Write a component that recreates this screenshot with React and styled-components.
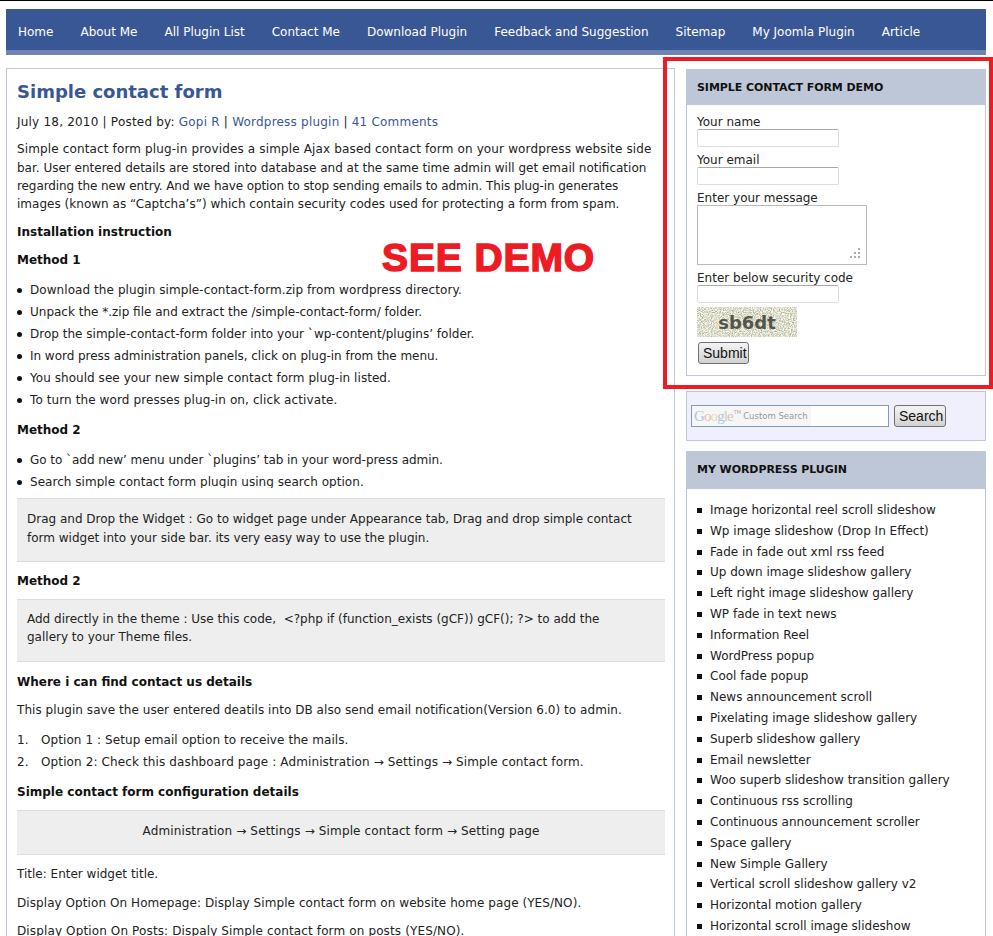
import React from "react";
import styled, { createGlobalStyle } from "styled-components";

const navItems = ["Home", "About Me", "All Plugin List", "Contact Me", "Download Plugin", "Feedback and Suggestion", "Sitemap", "My Joomla Plugin", "Article"];

const method1 = [
  { text: "Download the plugin simple-contact-form.zip from wordpress directory.", ls: 0.07 },
  { text: "Unpack the *.zip file and extract the /simple-contact-form/ folder.", ls: 0 },
  { text: "Drop the simple-contact-form folder into your `wp-content/plugins’ folder.", ls: 0.01 },
  { text: "In word press administration panels, click on plug-in from the menu.", ls: -0.03 },
  { text: "You should see your new simple contact form plug-in listed.", ls: 0.05 },
  { text: "To turn the word presses plug-in on, click activate.", ls: 0.1 }
];

const plugins = [
  "Image horizontal reel scroll slideshow", "Wp image slideshow (Drop In Effect)", "Fade in fade out xml rss feed",
  "Up down image slideshow gallery", "Left right image slideshow gallery", "WP fade in text news", "Information Reel",
  "WordPress popup", "Cool fade popup", "News announcement scroll", "Pixelating image slideshow gallery",
  "Superb slideshow gallery", "Email newsletter", "Woo superb slideshow transition gallery", "Continuous rss scrolling",
  "Continuous announcement scroller", "Space gallery", "New Simple Gallery", "Vertical scroll slideshow gallery v2",
  "Horizontal motion gallery", "Horizontal scroll image slideshow"
];

const googleLetters = [
  ["G", "#b3c3e6"], ["o", "#e6bdb6"], ["o", "#ecd9aa"], ["g", "#b3c3e6"], ["l", "#b9dab9"], ["e", "#e6bdb6"]
];

const GlobalStyle = createGlobalStyle`
  html, body {
    margin: 0;
    padding: 0;
    background: #fff;
  }
  body {
    font-family: "DejaVu Sans", Verdana, sans-serif;
    font-size: 12px;
    color: #222;
  }
`;

const Page = styled.div`
  position: relative;
  width: 993px;
  height: 936px;
  overflow: hidden;
  border-top: 1px solid #000;
  box-sizing: border-box;
  padding: 8px 7px 0 6px;
`;

const Nav = styled.nav`
  display: flex;
  height: 37px;
  align-items: center;
  padding: 4px 0 0 12px;
  gap: 27px;
  background: #3a5795;
  border-bottom: 5px solid #6d84b4;
  color: #fff;
`;

const NavLink = styled.span`
  white-space: nowrap;
`;

const Columns = styled.div`
  display: flex;
  align-items: flex-start;
  gap: 11px;
  margin-top: 13px;
`;

const Content = styled.main`
  width: 669px;
  height: 900px;
  flex: none;
  box-sizing: border-box;
  border: 1px solid #bdc7d8;
  padding: 11px 9px 10px 10px;
`;

const Title = styled.h1`
  margin: 0;
  font-size: 18px;
  line-height: 24px;
  font-weight: bold;
  color: #3a5795;
`;

const Meta = styled.p`
  margin: 9px 0 0;
  line-height: 18.3px;
  letter-spacing: 0.21px;
`;

const Link = styled.a`
  color: #3a5795;
`;

const Para = styled.p`
  margin: ${(p) => p.$top ?? 10}px 0 0;
  line-height: 18.3px;
  letter-spacing: ${(p) => p.$ls ?? 0}px;
`;

const Line = styled.span`
  display: block;
  white-space: nowrap;
  letter-spacing: ${(p) => p.$ls ?? 0}px;
`;

const Heading = styled.h3`
  margin: ${(p) => p.$top ?? 10}px 0 0;
  font-size: 12px;
  line-height: 18px;
  font-weight: bold;
  color: #111;
`;

const BulletList = styled.ul`
  margin: 10px 0 0;
  padding: 0 0 0 13px;
  list-style: none;
  height: ${(p) => p.$height || "auto"};
  overflow: hidden;
`;

const Bullet = styled.li`
  position: relative;
  line-height: 22px;
  letter-spacing: ${(p) => p.$ls ?? 0}px;
  &::before {
    content: "";
    position: absolute;
    left: -13px;
    top: 9px;
    width: 5px;
    height: 5px;
    border-radius: 50%;
    background: #111;
  }
`;

const NumberList = styled.ol`
  margin: 10px 0 0;
  padding: 0 0 0 24px;
  list-style: none;
  counter-reset: step;
`;

const NumberItem = styled.li`
  position: relative;
  line-height: 22px;
  letter-spacing: ${(p) => p.$ls ?? 0}px;
  counter-increment: step;
  &::before {
    content: counter(step) ".";
    position: absolute;
    left: -24px;
  }
`;

const Note = styled.div`
  margin-top: ${(p) => p.$top ?? 10}px;
  padding: ${(p) => (p.$low ? "11px 10px 13.5px" : "10px 10px 14.5px")};
  background: #eee;
  border-top: 1px solid #ddd;
  border-bottom: 1px solid #ddd;
  line-height: 18.3px;
  letter-spacing: ${(p) => p.$ls ?? 0.03}px;
  text-align: ${(p) => (p.$center ? "center" : "left")};
`;

const Sidebar = styled.aside`
  width: 300px;
  flex: none;
  margin-top: 1px;
  display: flex;
  flex-direction: column;
`;

const WidgetTitle = styled.h2`
  margin: 0;
  padding: 0 11px;
  height: ${(p) => p.$height}px;
  line-height: ${(p) => p.$line ?? p.$height}px;
  background: #bdc7d8;
  font-size: 11px;
  font-weight: bold;
  letter-spacing: -0.06px;
  color: #111;
  text-transform: uppercase;
`;

const WidgetBody = styled.div`
  border: 1px solid #bdc7d8;
  border-top: none;
  padding: ${(p) => p.$pad || "10px"};
`;

const Field = styled.label`
  display: block;
  line-height: 14px;
  margin-bottom: ${(p) => p.$bottom ?? 6}px;
  color: #222;
`;

const TextInput = styled.div`
  box-sizing: border-box;
  width: 142px;
  height: 18px;
  border: 1px solid #ddd;
  border-top-color: #aaa;
  border-radius: 2px;
`;

const TextArea = styled.div`
  position: relative;
  box-sizing: border-box;
  width: 170px;
  height: 60px;
  border: 1px solid #bbb;
`;

const Grip = styled.svg`
  position: absolute;
  right: 6px;
  bottom: 6px;
`;

const Captcha = styled.div`
  position: relative;
  display: flex;
  align-items: center;
  justify-content: center;
  width: 100px;
  height: 30px;
  margin-top: 4px;
  overflow: hidden;
  font-size: 18px;
  font-weight: bold;
  color: #55554c;
`;

const CaptchaNoise = styled.svg`
  position: absolute;
  left: 0;
  top: 0;
`;

const CaptchaText = styled.span`
  position: relative;
`;

const Button = styled.button`
  box-sizing: border-box;
  height: 22px;
  padding: 0 4px;
  font-family: "Liberation Sans", Arial, sans-serif;
  font-size: 14px;
  color: #111;
  background: linear-gradient(#f4f4f4, #d2d2d2);
  border: 1px solid #707070;
  border-radius: 3px;
`;

const SubmitButton = styled(Button)`
  display: block;
  width: 51px;
  margin: 5px 0 0 1px;
`;

const SearchButton = styled(Button)`
  width: 52px;
`;

const SearchBox = styled.div`
  display: flex;
  align-items: center;
  gap: 5px;
  height: 50px;
  margin: 15px 0 10px;
  padding-left: 4px;
  box-sizing: border-box;
  background: #eff0fc;
  border: 1px solid #bdc7d8;
`;

const SearchInput = styled.div`
  box-sizing: border-box;
  width: 198px;
  height: 22px;
  background: #fff;
  border: 1px solid #7f9db9;
`;

const Watermark = styled.div`
  display: flex;
  align-items: center;
  box-sizing: border-box;
  width: 119px;
  height: 100%;
  padding-left: 2px;
  background: #f6f6f6;
`;

const GoogleLetter = styled.span`
  font-family: "Liberation Serif", serif;
  font-size: 15px;
  letter-spacing: -0.9px;
  color: ${(p) => p.$color};
`;

const Trademark = styled.span`
  align-self: flex-start;
  margin: 3px 0 0 1px;
  font-size: 5px;
  color: #aaa;
`;

const WatermarkCaption = styled.span`
  margin-left: 2px;
  font-size: 8.5px;
  color: #999;
  white-space: nowrap;
`;

const PluginList = styled.ul`
  margin: 0;
  padding: 0 0 0 13px;
  list-style: none;
`;

const PluginItem = styled.li`
  position: relative;
  line-height: 20.8px;
  &::before {
    content: "";
    position: absolute;
    left: -13px;
    top: 8px;
    width: 5px;
    height: 5px;
    background: #111;
  }
`;

const Highlight = styled.div`
  position: absolute;
  left: 663px;
  top: 56px;
  width: 330px;
  height: 332px;
  box-sizing: border-box;
  border: 4px solid #ed1c24;
  pointer-events: none;
`;

const DemoLabel = styled.div`
  position: absolute;
  left: 382px;
  top: 234px;
  font-family: "Liberation Sans", Arial, sans-serif;
  font-size: 39px;
  line-height: 46px;
  font-weight: bold;
  color: #ed1c24;
  -webkit-text-stroke: 1.5px #ed1c24;
  letter-spacing: 0.9px;
  white-space: nowrap;
`;

const App = () => {
  return (
    <>
      <GlobalStyle />
      <Page>
        <Nav>
          {navItems.map((item) => (
            <NavLink key={item}>{item}</NavLink>
          ))}
        </Nav>
        <Columns>
          <Content>
            <Title>Simple contact form</Title>
            <Meta>
              July 18, 2010 | Posted by: <Link>Gopi R</Link> | <Link>Wordpress plugin</Link> | <Link>41 Comments</Link>
            </Meta>
            <Para $top={9}>
              <Line $ls={0.14}>Simple contact form plug-in provides a simple Ajax based contact form on your wordpress website side</Line>
              <Line>bar. User entered details are stored into database and at the same time admin will get email notification</Line>
              <Line $ls={-0.09}>regarding the new entry. And we have option to stop sending emails to admin. This plug-in generates</Line>
              <Line $ls={0.02}>images (known as “Captcha’s”) which contain security codes used for protecting a form from spam.</Line>
            </Para>
            <Heading>Installation instruction</Heading>
            <Heading>Method 1</Heading>
            <BulletList>
              {method1.map((item) => (
                <Bullet key={item.text} $ls={item.ls}>{item.text}</Bullet>
              ))}
            </BulletList>
            <Heading>Method 2</Heading>
            <BulletList $height="39px">
              <Bullet $ls={-0.04}>Go to `add new’ menu under `plugins’ tab in your word-press admin.</Bullet>
              <Bullet $ls={0.04}>Search simple contact form plugin using search option.</Bullet>
            </BulletList>
            <Note $top={10} $low>
              <Line>Drag and Drop the Widget : Go to widget page under Appearance tab, Drag and drop simple contact</Line>
              <Line>form widget into your side bar. its very easy way to use the plugin.</Line>
            </Note>
            <Heading>Method 2</Heading>
            <Note $top={9}>
              <Line>Add directly in the theme : Use this code,&nbsp; &lt;?php if (function_exists (gCF)) gCF(); ?&gt; to add the</Line>
              <Line>gallery to your Theme files.</Line>
            </Note>
            <Heading $top={11}>Where i can find contact us details</Heading>
            <Para $ls={0.05}>This plugin save the user entered deatils into DB also send email notification(Version 6.0) to admin.</Para>
            <NumberList>
              <NumberItem $ls={0.08}>Option 1 : Setup email option to receive the mails.</NumberItem>
              <NumberItem $ls={0.12}>Option 2: Check this dashboard page : Administration → Settings → Simple contact form.</NumberItem>
            </NumberList>
            <Heading>Simple contact form configuration details</Heading>
            <Note $top={9} $low $center $ls={0.14}>Administration → Settings → Simple contact form → Setting page</Note>
            <Para>Title: Enter widget title.</Para>
            <Para $top={11} $ls={0.07}>Display Option On Homepage: Display Simple contact form on website home page (YES/NO).</Para>
            <Para $ls={0.13}>Display Option On Posts: Dispaly Simple contact form on posts (YES/NO).</Para>
          </Content>
          <Sidebar>
            <WidgetTitle $height={36} $line={38}>Simple contact form demo</WidgetTitle>
            <WidgetBody $pad="10px 10px 11px">
              <Field>
                Your name
                <TextInput />
              </Field>
              <Field>
                Your email
                <TextInput />
              </Field>
              <Field>
                Enter your message
                <TextArea>
                  <Grip width="10" height="10" viewBox="0 0 10 10">
                    <g fill="#aaa">
                      <rect x="8" y="0" width="2" height="2" />
                      <rect x="4" y="4" width="2" height="2" />
                      <rect x="8" y="4" width="2" height="2" />
                      <rect x="0" y="8" width="2" height="2" />
                      <rect x="4" y="8" width="2" height="2" />
                      <rect x="8" y="8" width="2" height="2" />
                    </g>
                  </Grip>
                </TextArea>
              </Field>
              <Field $bottom={0}>
                Enter below security code
                <TextInput />
              </Field>
              <Captcha>
                <CaptchaNoise width="100" height="30">
                  <filter id="captcha-noise" x="0" y="0" width="100%" height="100%" colorInterpolationFilters="sRGB">
                    <feTurbulence type="fractalNoise" baseFrequency="0.9" numOctaves="2" seed="4" />
                    <feColorMatrix values="0.7 0 0 0 0.52  0.7 0 0 0 0.52  0.65 0 0 0 0.48  0 0 0 0 1" />
                  </filter>
                  <rect width="100" height="30" filter="url(#captcha-noise)" />
                </CaptchaNoise>
                <CaptchaText>sb6dt</CaptchaText>
              </Captcha>
              <SubmitButton>Submit</SubmitButton>
            </WidgetBody>
            <SearchBox>
              <SearchInput>
                <Watermark>
                  {googleLetters.map(([letter, color], i) => (
                    <GoogleLetter key={i} $color={color}>{letter}</GoogleLetter>
                  ))}
                  <Trademark>TM</Trademark>
                  <WatermarkCaption>Custom Search</WatermarkCaption>
                </Watermark>
              </SearchInput>
              <SearchButton>Search</SearchButton>
            </SearchBox>
            <WidgetTitle $height={38}>My Wordpress plugin</WidgetTitle>
            <WidgetBody $pad="11px 10px 0">
              <PluginList>
                {plugins.map((name) => (
                  <PluginItem key={name}>{name}</PluginItem>
                ))}
              </PluginList>
            </WidgetBody>
          </Sidebar>
        </Columns>
        <DemoLabel>SEE DEMO</DemoLabel>
        <Highlight />
      </Page>
    </>
  );
};

export default App;
